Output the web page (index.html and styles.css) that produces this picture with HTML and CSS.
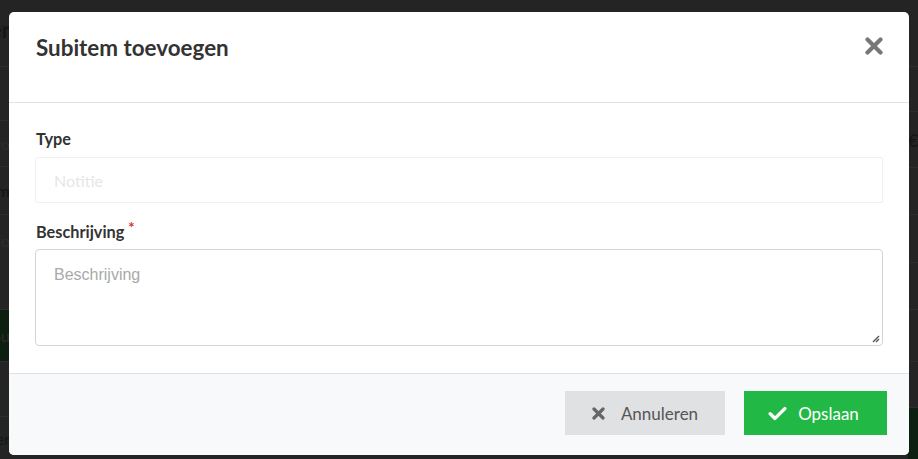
FILE: index.html
```html
<!DOCTYPE html>
<html lang="nl">
<head>
<meta charset="utf-8">
<title>Subitem toevoegen</title>
<link rel="stylesheet" href="styles.css">
</head>
<body>
<div class="backdrop">
  <div class="strip strip-left">
    <div class="row r67"><span class="frag bold big">er</span></div>
    <div class="row r54"></div>
    <div class="row r46"><span class="frag dim">vo</span></div>
    <div class="row r48"><span class="frag bold">m</span></div>
    <div class="row r95"><span class="frag dim fo">fo</span></div>
    <div class="row r52 green"><span class="frag dim">Su</span></div>
    <div class="row r55"></div>
    <div class="row rest"><span class="frag">er</span></div>
  </div>
  <div class="strip strip-right">
    <div class="row r67"></div>
    <div class="row r45"></div>
    <div class="row r56"><span class="frag">€</span></div>
    <div class="row r47"></div>
    <div class="row r48"></div>
    <div class="row r47"></div>
    <div class="row r52"></div>
    <div class="row r46"></div>
    <div class="row rest green"></div>
  </div>
</div>

<div class="modal">
  <div class="modal-header">
    <h2 class="modal-title">Subitem toevoegen</h2>
    <button class="close" aria-label="Sluiten">
      <svg width="18" height="18" viewBox="0 0 18 18"><path d="M2.5 2.5L15.5 15.5M15.5 2.5L2.5 15.5" stroke="#777" stroke-width="4.2" stroke-linecap="round"/></svg>
    </button>
  </div>
  <div class="modal-body">
    <label class="label">Type</label>
    <div class="input disabled">Notitie</div>
    <label class="label second">Beschrijving<sup class="req">*</sup></label>
    <div class="textarea">
      <span class="placeholder">Beschrijving</span>
      <svg class="grip" width="8" height="8" viewBox="0 0 8 8"><path d="M7 1L1 7M7 4L4 7" stroke="#555" stroke-width="1.4"/></svg>
    </div>
  </div>
  <div class="modal-footer">
    <button class="btn btn-cancel">
      <svg width="13" height="13" viewBox="0 0 13 13"><path d="M2 2L11 11M11 2L2 11" stroke="#666" stroke-width="3.2" stroke-linecap="round"/></svg>
      <span>Annuleren</span>
    </button>
    <button class="btn btn-save">
      <svg width="19" height="15" viewBox="0 0 19 15"><path d="M2.2 7.8L7 12.4L16.8 2.6" fill="none" stroke="#fff" stroke-width="3.4" stroke-linecap="round" stroke-linejoin="round"/></svg>
      <span>Opslaan</span>
    </button>
  </div>
</div>
</body>
</html>
```

FILE: styles.css
```css
* { box-sizing: border-box; }

html, body {
  margin: 0;
  padding: 0;
  width: 918px;
  height: 459px;
  overflow: hidden;
  background: #242424;
  font-family: Lato, "Open Sans", sans-serif;
}

.backdrop {
  display: flex;
  justify-content: space-between;
  height: 459px;
}

.strip {
  display: flex;
  flex-direction: column;
  width: 10px;
  overflow: hidden;
}

.row {
  border-bottom: 1px solid #2e2e2e;
  display: flex;
  align-items: center;
  justify-content: flex-end;
  overflow: hidden;
  flex-shrink: 0;
}
.strip-right .row { justify-content: flex-start; }

.r45 { height: 45px; }
.r46 { height: 46px; }
.r47 { height: 47px; }
.r48 { height: 48px; }
.r52 { height: 52px; }
.r54 { height: 54px; }
.r55 { height: 55px; }
.r56 { height: 56px; }
.r67 { height: 67px; }
.r95 { height: 95px; }
.rest { flex: 1; border-bottom: 0; }
.green { background: #0d1f10; }

.frag {
  font-size: 16px;
  color: #151515;
  white-space: nowrap;
}
.frag.bold { font-weight: 700; }
.frag.big { font-size: 22px; align-self: flex-start; margin-top: 16px; }
.frag.dim { color: #2d2d2d; }
.frag.fo { align-self: flex-start; margin-top: 16px; }
.strip-right .frag { font-size: 18px; }

.modal {
  position: absolute;
  left: 9px;
  top: 12px;
  width: 900px;
  height: 443px;
  background: #fff;
  border-radius: 5px;
  display: flex;
  flex-direction: column;
  overflow: hidden;
}

.modal-header {
  flex-shrink: 0;
  display: flex;
  justify-content: space-between;
  align-items: flex-start;
  height: 91px;
  padding: 23px 26px 0 27px;
  border-bottom: 1px solid #e3e3e3;
}

.modal-title {
  margin: 0;
  font-size: 22.4px;
  line-height: 26px;
  font-weight: 700;
  color: #333;
}

.close {
  border: 0;
  background: none;
  padding: 0;
  margin-top: 2px;
  width: 18px;
  height: 18px;
  display: flex;
}

.modal-body {
  display: flex;
  flex-direction: column;
  padding: 27px 26px 0 26px;
  flex: 1;
}

.label {
  font-size: 16.3px;
  line-height: 18px;
  height: 18px;
  font-weight: 700;
  color: #333;
  margin-bottom: 9px;
  padding-left: 1px;
}
.label.second { margin-top: 20px; margin-bottom: 8px; }

.req {
  color: #e03030;
  font-size: 15px;
  line-height: 0;
  margin-left: 4px;
  position: relative;
  top: 1px;
}

.input {
  height: 46px;
  border: 1px solid #f0f0f0;
  border-radius: 2px;
  padding: 0 18px;
  display: flex;
  align-items: center;
  font-size: 16px;
  color: #e6e6e6;
}

.textarea {
  height: 97px;
  border: 1px solid #d4d4d4;
  border-radius: 4px;
  padding: 14px 18px;
  position: relative;
}

.placeholder {
  font-family: "Liberation Sans", Arial, sans-serif;
  font-size: 16px;
  line-height: 20px;
  color: #a9a9a9;
}

.grip {
  position: absolute;
  right: 2px;
  bottom: 2px;
}

.modal-footer {
  flex-shrink: 0;
  height: 82px;
  background: #f8f9fb;
  border-top: 1px solid #e1e2e4;
  display: flex;
  justify-content: flex-end;
  align-items: flex-start;
  padding: 17px 22px 0 0;
  gap: 19px;
}

.btn {
  height: 44px;
  border: 0;
  border-radius: 0;
  display: flex;
  align-items: center;
  justify-content: center;
  font-family: Lato, "Open Sans", sans-serif;
  font-size: 17px;
  gap: 14px;
  padding: 0;
}

.btn-cancel {
  width: 160px;
  background: #e0e1e3;
  color: #555;
}
.btn-cancel span { margin-left: 2px; }

.btn-save {
  width: 143px;
  background: #22b845;
  color: #fff;
  gap: 11px;
  padding-right: 4px;
}
```
